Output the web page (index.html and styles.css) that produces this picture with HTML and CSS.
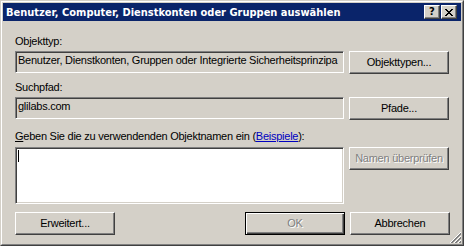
FILE: index.html
```html
<!DOCTYPE html>
<html>
<head>
<meta charset="utf-8">
<link rel="stylesheet" href="styles.css">
</head>
<body>
<div class="window">
  <div class="frame">
    <div class="titlebar">
      <span class="title">Benutzer, Computer, Dienstkonten oder Gruppen auswählen</span>
      <div class="tbtns">
        <span class="tbtn help">?</span>
        <span class="tbtn close"><svg width="8" height="7" viewBox="0 0 8 7"><path d="M0 0h2v1h1v1h2V1h1V0h2v1H7v1H6v1H5v1h1v1h1v1h1v1H6V6H5V5H3v1H2v1H0V6h1V5h1V4h1V3H2V2H1V1H0z" fill="#000"/></svg></span>
      </div>
    </div>
    <div class="content">
      <div class="label">Objekttyp:</div>
      <div class="row">
        <div class="field">Benutzer, Dienstkonten, Gruppen oder Integrierte Sicherheitsprinzipa</div>
        <div class="btn">Objekttypen...</div>
      </div>
      <div class="label gap-l">Suchpfad:</div>
      <div class="row">
        <div class="field">glilabs.com</div>
        <div class="btn">Pfade...</div>
      </div>
      <div class="label gap-l3"><u>G</u>eben Sie die zu verwendenden Objektnamen ein (<a class="link">Beispiele</a>):</div>
      <div class="row row-edit">
        <div class="edit"><span class="caret"></span></div>
        <div class="btn disabled">Namen überprüfen</div>
      </div>
      <div class="footer">
        <div class="btn">Erweitert...</div>
        <div class="group">
          <div class="btn default disabled">OK</div>
          <div class="btn">Abbrechen</div>
        </div>
      </div>
    </div>
    <svg class="grip" width="12" height="12" viewBox="0 0 12 12">
      <path d="M11 0L0 11M11 4L4 11M11 8L8 11" stroke="#fff" stroke-width="1" shape-rendering="crispEdges"/>
      <path d="M11 1L1 11M11 2L2 11M11 5L5 11M11 6L6 11M11 9L9 11M11 10L10 11" stroke="#808080" stroke-width="1" shape-rendering="crispEdges"/>
    </svg>
  </div>
</div>
</body>
</html>
```
FILE: styles.css
```css
html, body {
  margin: 0;
  padding: 0;
  background: #d4d0c8;
}
.window {
  box-sizing: border-box;
  width: 464px;
  height: 246px;
  border: 1px solid;
  border-color: #d4d0c8 #404040 #404040 #d4d0c8;
  font-family: "Liberation Sans", Arial, sans-serif;
  font-size: 11px;
  letter-spacing: -0.25px;
  color: #000;
}
.frame {
  position: relative;
  box-sizing: border-box;
  height: 100%;
  border: 1px solid;
  border-color: #fff #808080 #808080 #fff;
  padding: 1px;
  background: #d4d0c8;
}
.titlebar {
  height: 18px;
  background: #0a246a;
  display: flex;
  align-items: center;
  justify-content: space-between;
  padding: 0 4px 0 3px;
}
.title {
  color: #fff;
  font-family: "DejaVu Sans Condensed", "DejaVu Sans", sans-serif;
  font-weight: bold;
  font-size: 11px;
  letter-spacing: 0;
  line-height: 18px;
  padding-top: 1px;
  white-space: nowrap;
}
.tbtns {
  display: flex;
  gap: 1px;
}
.tbtn {
  box-sizing: border-box;
  width: 16px;
  height: 14px;
  background: #d4d0c8;
  border: 1px solid;
  border-color: #fff #404040 #404040 #fff;
  box-shadow: inset -1px -1px #808080;
  display: flex;
  align-items: center;
  justify-content: center;
}
.help {
  font-family: "DejaVu Sans", sans-serif;
  font-weight: bold;
  font-size: 10px;
  letter-spacing: 0;
  line-height: 12px;
}
.close svg {
  display: block;
}
.content {
  padding: 14px 12px 0 12px;
}
.label {
  line-height: 13px;
  height: 13px;
  margin-bottom: 3px;
  white-space: nowrap;
}
.gap-l {
  margin-top: 7px;
}
.gap-l3 {
  margin-top: 10px;
  margin-bottom: 4px;
}
.link {
  color: #0000c0;
  text-decoration: underline;
}
.row {
  display: flex;
  gap: 5px;
  align-items: flex-start;
  height: 23px;
}
.row-edit {
  height: 57px;
}
.field, .edit {
  box-sizing: border-box;
  width: 330px;
  height: 22px;
  border: 1px solid;
  border-color: #808080 #fff #fff #808080;
  box-shadow: inset 1px 1px #404040, inset -1px -1px #d4d0c8;
  padding: 2px 2px 0 2px;
  line-height: 13px;
  white-space: nowrap;
  overflow: hidden;
}
.edit {
  height: 57px;
  background: #fff;
}
.caret {
  display: block;
  width: 1px;
  height: 12px;
  background: #000;
}
.btn {
  box-sizing: border-box;
  width: 100px;
  height: 23px;
  flex: none;
  border: 1px solid;
  border-color: #fff #404040 #404040 #fff;
  box-shadow: inset -1px -1px #808080;
  display: flex;
  align-items: center;
  justify-content: center;
  line-height: 13px;
  white-space: nowrap;
}
.btn.disabled {
  color: #808080;
  text-shadow: 1px 1px #fff;
}
.btn.default {
  border-color: #000;
  box-shadow: inset 1px 1px #fff, inset -1px -1px #404040, inset -2px -2px #808080;
}
.footer {
  margin-top: 8px;
  display: flex;
  justify-content: space-between;
  width: 435px;
}
.group {
  display: flex;
  gap: 5px;
}
.grip {
  position: absolute;
  right: 0;
  bottom: 0;
}
```
